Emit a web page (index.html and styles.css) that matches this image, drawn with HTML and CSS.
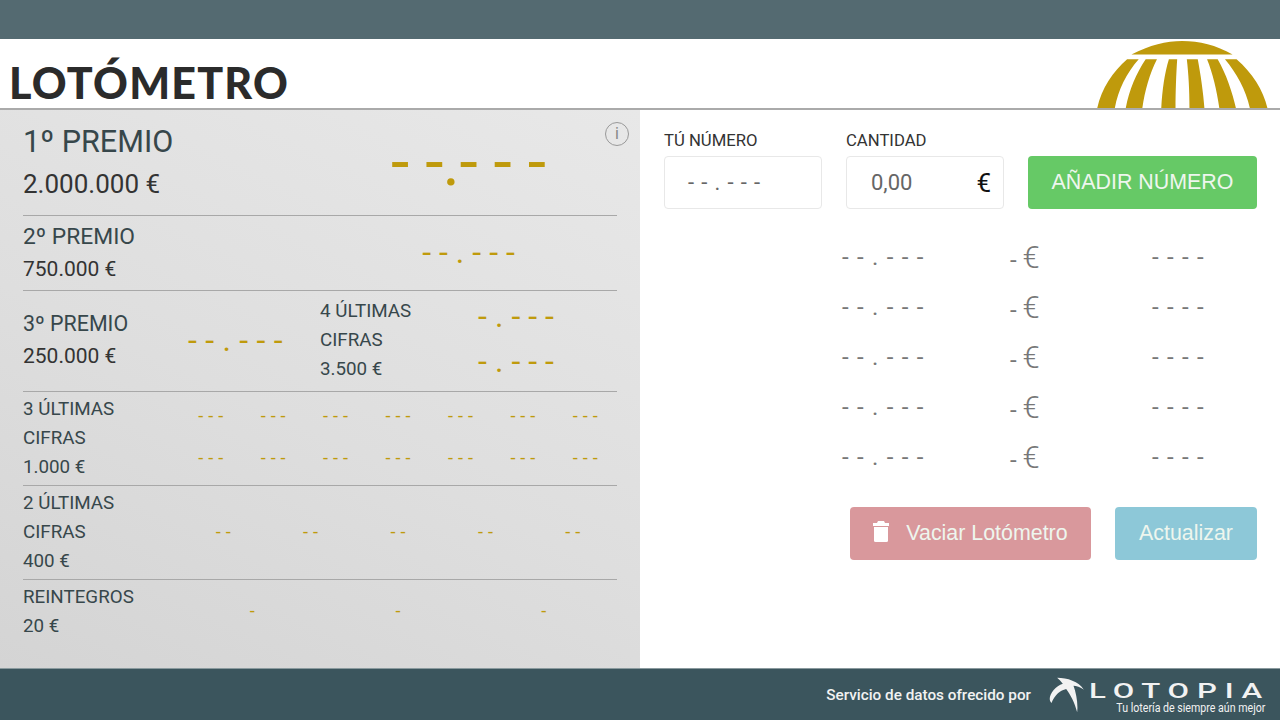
FILE: index.html
```html
<!DOCTYPE html>
<html lang="en">
<head>
    <meta charset="UTF-8">
    <title>Lotómetro</title>
    <link rel="stylesheet" href="styles.css">
</head>
<body>
    <div class="topbar"></div>

    <header class="header">
        <h1 class="title">LOTÓMETRO</h1>
        <svg class="dome" viewBox="170 33 515 202" width="172" height="67">
            <path d="M275 74C330 45 380 33 428 33C480 33 530 45 580 74Z"/>
            <path d="M262 88H297C260 130 235 180 225 235H172C185 175 220 125 262 88Z"/>
            <path d="M318 88H352C330 130 315 185 308 235H258C268 180 290 130 318 88Z"/>
            <path d="M388 88H413C410 130 408 190 408 235H365C368 180 375 130 388 88Z"/>
            <path d="M442 88H475C483 130 492 190 495 235H450C450 180 447 130 442 88Z"/>
            <path d="M503 88H535C560 130 580 190 590 235H540C532 180 520 130 503 88Z"/>
            <path d="M557 88H592C640 130 672 180 685 235H632C620 180 592 130 557 88Z"/>
        </svg>
    </header>

    <main class="main">
        <!-- Premios -->
        <section class="prizes">
            <span class="info">i</span>

            <div class="row row-first">
                <div class="label">
                    <div class="prize-name">1º PREMIO</div>
                    <div class="prize-value">2.000.000 €</div>
                </div>
                <div class="nums"><span class="n1">--<span class="n1-dot">.</span>---</span></div>
            </div>

            <div class="row row-second">
                <div class="label">
                    <div class="prize-name">2º PREMIO</div>
                    <div class="prize-value">750.000 €</div>
                </div>
                <div class="nums"><span class="n2">--.---</span></div>
            </div>

            <div class="row row-third">
                <div class="label">
                    <div class="prize-name">3º PREMIO</div>
                    <div class="prize-value">250.000 €</div>
                </div>
                <div class="third-num"><span class="n3">--.---</span></div>
                <div class="label small">4 ÚLTIMAS<br>CIFRAS<br>3.500 €</div>
                <div class="four-nums">
                    <span class="n3">-.---</span>
                    <span class="n3">-.---</span>
                </div>
            </div>

            <div class="row row-small">
                <div class="label small">3 ÚLTIMAS<br>CIFRAS<br>1.000 €</div>
                <div class="grid grid-7">
                    <span class="n4">---</span><span class="n4">---</span><span class="n4">---</span><span class="n4">---</span><span class="n4">---</span><span class="n4">---</span><span class="n4">---</span>
                    <span class="n4">---</span><span class="n4">---</span><span class="n4">---</span><span class="n4">---</span><span class="n4">---</span><span class="n4">---</span><span class="n4">---</span>
                </div>
            </div>

            <div class="row row-small">
                <div class="label small">2 ÚLTIMAS<br>CIFRAS<br>400 €</div>
                <div class="grid grid-5">
                    <span class="n4">--</span><span class="n4">--</span><span class="n4">--</span><span class="n4">--</span><span class="n4">--</span>
                </div>
            </div>

            <div class="row row-last">
                <div class="label small">REINTEGROS<br>20 €</div>
                <div class="grid grid-3">
                    <span class="n4">-</span><span class="n4">-</span><span class="n4">-</span>
                </div>
            </div>
        </section>

        <!-- Numeros del usuario -->
        <section class="tickets">
            <div class="form">
                <div class="field">
                    <label class="field-label">TÚ NÚMERO</label>
                    <div class="input input-num">--.---</div>
                </div>
                <div class="field">
                    <label class="field-label">CANTIDAD</label>
                    <div class="input input-amount"><span>0,00</span><span class="euro">€</span></div>
                </div>
                <button class="btn btn-add">AÑADIR NÚMERO</button>
            </div>

            <div class="list">
                <div class="list-row"><span class="l-num">--.---</span><span class="l-amount">- <b>€</b></span><span class="l-prize">----</span></div>
                <div class="list-row"><span class="l-num">--.---</span><span class="l-amount">- <b>€</b></span><span class="l-prize">----</span></div>
                <div class="list-row"><span class="l-num">--.---</span><span class="l-amount">- <b>€</b></span><span class="l-prize">----</span></div>
                <div class="list-row"><span class="l-num">--.---</span><span class="l-amount">- <b>€</b></span><span class="l-prize">----</span></div>
                <div class="list-row"><span class="l-num">--.---</span><span class="l-amount">- <b>€</b></span><span class="l-prize">----</span></div>
            </div>

            <div class="actions">
                <button class="btn btn-clear">
                    <svg class="trash" viewBox="0 0 16 21" width="16" height="21">
                        <path d="M5 0H11L12 2H16V5H0V2H4Z"/>
                        <path d="M1 6H15V19.5Q15 21 13.5 21H2.5Q1 21 1 19.5Z"/>
                    </svg>
                    Vaciar Lotómetro
                </button>
                <button class="btn btn-update">Actualizar</button>
            </div>
        </section>
    </main>

    <footer class="footer">
        <span class="service">Servicio de datos ofrecido por</span>
        <svg class="bird" viewBox="28 22 110 108" width="37" height="36">
            <path d="M38 100C22 85 45 50 72 42C66 34 60 28 55 24C85 24 120 35 135 60C125 52 112 48 104 48C112 70 118 100 115 128C108 100 95 75 82 58C65 62 48 75 38 100Z"/>
        </svg>
        <div class="brand">
            <div class="brand-name">LOTOPIA</div>
            <div class="brand-tag">Tu lotería de siempre aún mejor</div>
        </div>
    </footer>
</body>
</html>
```

FILE: styles.css
```css
html, body {
    height: 100%;
}

body {
    margin: 0;
    height: 720px;
    overflow: hidden;
    display: flex;
    flex-direction: column;
    font-family: Roboto, Arial, sans-serif;
    background-color: #fff;
    color: #333;
}

.topbar {
    height: 39px;
    background-color: #546a71;
}

.header {
    height: 69px;
    display: flex;
    justify-content: space-between;
    align-items: flex-end;
    padding: 0 12px 0 9px;
    border-bottom: 2px solid #aaa;
}

.title {
    margin: 0;
    font-family: Lato, sans-serif;
    font-weight: 900;
    font-size: 43px;
    line-height: 50px;
    letter-spacing: 1.2px;
    color: #2b2b2b;
}

.dome {
    display: block;
    fill: #bf9a0c;
}

.main {
    flex: 1;
    display: flex;
    min-height: 0;
}

.prizes {
    position: relative;
    box-sizing: border-box;
    width: 640px;
    padding: 0 23px;
    background: linear-gradient(25deg, #d4d4d4 0%, #dedede 45%, #e8e8e8 100%);
}

.info {
    position: absolute;
    top: 12px;
    right: 11px;
    width: 22px;
    height: 22px;
    border: 1.5px solid #999;
    border-radius: 50%;
    text-align: center;
    line-height: 22px;
    font-size: 16px;
    color: #888;
}

.row {
    display: flex;
    align-items: center;
    border-bottom: 1px solid #a8a8a8;
}

.row-first { height: 105px; }
.row-second { height: 74px; }
.row-third { height: 100px; }
.row-small { height: 93px; }
.row-last { height: 62px; border-bottom: 0; }

.label {
    width: 157px;
    flex-shrink: 0;
    color: #37474b;
}

.label.small {
    font-size: 18.8px;
    line-height: 29px;
}

.row-last .label.small { margin-top: 2px; }

.prize-name {
    font-size: 22.8px;
    line-height: 32px;
}

.prize-value {
    font-size: 21px;
    line-height: 32px;
    color: #333;
}

.row-first .label,
.row-second .label { width: 297px; }

.row-first .prize-name {
    font-size: 30.6px;
    line-height: 43px;
}

.row-first .prize-value {
    font-size: 26px;
    line-height: 43px;
}

.row-third .label { width: 132px; margin-top: -2px; }
.row-third .label.small { width: 128px; }
.row-third .prize-name { font-size: 21.4px; }

.nums {
    flex: 1;
    text-align: center;
}

.third-num {
    width: 165px;
    text-align: center;
    padding-left: 4px;
    box-sizing: border-box;
}

.four-nums {
    width: 136px;
    display: flex;
    flex-direction: column;
    align-items: center;
    gap: 21px;
    margin: -6px 0 0 4px;
}

.grid {
    flex: 1;
    display: grid;
    justify-items: center;
}

.grid-7 { grid-template-columns: repeat(7, 1fr); row-gap: 24px; margin-top: -4px; }
.grid-5 { grid-template-columns: repeat(5, 1fr); margin-top: -2px; }
.grid-3 { grid-template-columns: repeat(3, 1fr); }

/* placeholders de los numeros */
.n1, .n2, .n3, .n4 {
    color: #bf9a0c;
    white-space: nowrap;
}

.n1 {
    font-size: 66px;
    line-height: 50px;
    letter-spacing: 16px;
    position: relative;
    top: 1px;
    left: 8px;
}

.n1-dot {
    display: inline-block;
    width: 0;
    position: relative;
    left: -17px;
}

.n2 {
    font-size: 32px;
    line-height: 30px;
    letter-spacing: 8px;
    position: relative;
    top: -1px;
    left: 4px;
}

.n3 {
    font-size: 32px;
    line-height: 24px;
    letter-spacing: 8px;
}

.third-num .n3 { letter-spacing: 8.4px; }

.n4 {
    font-size: 18px;
    line-height: 18px;
    letter-spacing: 5px;
    margin-left: 4px;
}

.tickets {
    flex: 1;
    padding: 0 23px 0 24px;
}

.form {
    display: flex;
    align-items: flex-end;
    gap: 24px;
    padding-top: 20px;
}

.field {
    width: 158px;
}

.field-label {
    display: block;
    font-size: 16.7px;
    line-height: 22px;
    margin-bottom: 4px;
    color: #333;
}

.input {
    box-sizing: border-box;
    height: 53px;
    border: 1px solid #e8e8e8;
    border-radius: 4px;
    display: flex;
    align-items: center;
    color: #666;
    font-size: 22px;
}

.input-num {
    padding-left: 23px;
    letter-spacing: 7.2px;
}

.input-amount {
    justify-content: space-between;
    padding: 0 12px 0 24px;
}

.euro {
    color: #111;
    font-size: 26px;
}

.btn {
    border: 0;
    border-radius: 4px;
    font-family: "Liberation Sans", Arial, sans-serif;
    font-size: 21.4px;
    color: #eef6ee;
    height: 53px;
    cursor: pointer;
}

.btn-add {
    width: 229px;
    background-color: #66c966;
}

.list {
    margin-top: 23px;
}

.list-row {
    height: 50px;
    display: grid;
    grid-template-columns: 178px 170px 145px 1fr;
    align-items: center;
    color: #777;
    font-size: 24px;
}

.l-num {
    grid-column: 2;
    justify-self: start;
    letter-spacing: 8.4px;
}

.l-amount {
    grid-column: 3;
    margin-left: -2px;
}

.l-amount b {
    font-weight: 300;
    font-size: 31px;
}

.l-prize {
    grid-column: 4;
    letter-spacing: 8.4px;
    margin-left: -5px;
}

.actions {
    display: flex;
    justify-content: flex-end;
    gap: 24px;
    margin-top: 25px;
}

.btn-clear {
    width: 241px;
    background-color: #d9989c;
    display: flex;
    align-items: center;
    justify-content: center;
    gap: 17px;
}

.trash {
    fill: #fff;
    margin-bottom: 4px;
}

.btn-update {
    width: 142px;
    background-color: #8dc8d8;
}

.footer {
    box-sizing: border-box;
    height: 52px;
    border-top: 1px solid #8a9a9e;
    background-color: #3b555d;
    color: #f2f2f2;
    display: flex;
    align-items: center;
    justify-content: flex-end;
    padding-right: 15px;
}

.service {
    font-size: 15.3px;
    font-weight: 500;
    margin-right: 17px;
}

.bird {
    fill: #f2f2f2;
    margin-right: 5px;
}

.brand {
    width: 175px;
    display: flex;
    flex-direction: column;
    align-items: flex-end;
    margin-top: 5px;
}

.brand-name {
    font-size: 20px;
    line-height: 20px;
    font-weight: 500;
    letter-spacing: 5px;
    margin-right: -5px;
    white-space: nowrap;
    transform: scaleX(1.56);
    transform-origin: right center;
}

.brand-tag {
    font-size: 12.5px;
    line-height: 13px;
    white-space: nowrap;
    transform: scaleX(0.85);
    transform-origin: right center;
}
```
